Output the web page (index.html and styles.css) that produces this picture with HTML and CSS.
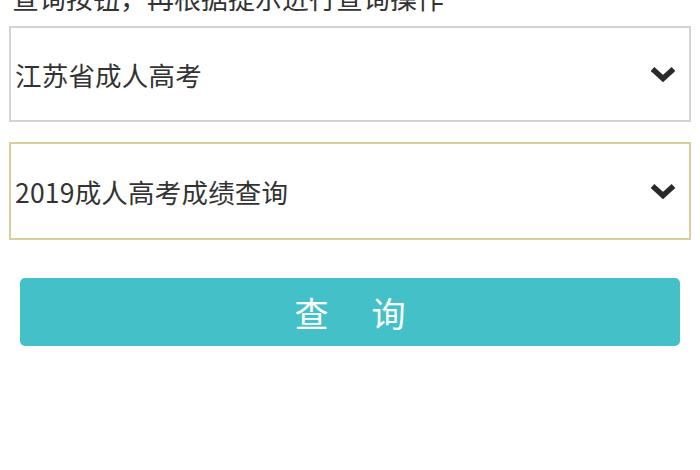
FILE: index.html
```html
<!DOCTYPE html>
<html lang="zh-CN">
<head>
<meta charset="utf-8">
<title>查询</title>
<link rel="stylesheet" href="styles.css">
</head>
<body>
<div class="page">
  <p class="hint">查询按钮，再根据提示进行查询操作</p>
  <div class="select select-gray">
    <span class="select-text">江苏省成人高考</span>
    <svg class="chev" width="28" height="18" viewBox="0 0 28 18"><path d="M3.5 4 L14 13.5 L24.5 4" fill="none" stroke="#2a2a2a" stroke-width="5.5" stroke-linejoin="miter" stroke-linecap="butt"/></svg>
  </div>
  <div class="select select-gold">
    <span class="select-text">2019成人高考成绩查询</span>
    <svg class="chev" width="28" height="18" viewBox="0 0 28 18"><path d="M3.5 4 L14 13.5 L24.5 4" fill="none" stroke="#2a2a2a" stroke-width="5.5" stroke-linejoin="miter" stroke-linecap="butt"/></svg>
  </div>
  <div class="btn-wrap">
    <button class="btn"><span>查</span><span>询</span></button>
  </div>
</div>
</body>
</html>
```
FILE: styles.css
```css
html, body {
  margin: 0;
  padding: 0;
  background: #ffffff;
}
body {
  font-family: "Noto Sans CJK SC", "Noto Sans", sans-serif;
  color: #2b2b2b;
  overflow: hidden;
}
.page {
  padding: 0 9px;
}
.hint {
  margin: -22px 0 0 3px;
  font-size: 27px;
  line-height: 40px;
  height: 40px;
  color: #333333;
  white-space: nowrap;
}
.select {
  box-sizing: border-box;
  display: flex;
  align-items: center;
  justify-content: space-between;
  margin-top: 8px;
  height: 96px;
  padding: 0 12px 0 4px;
  background: #fff;
}
.select-gray {
  border: 2px solid #d3d3d3;
}
.select-gold {
  margin-top: 20px;
  height: 98px;
  border: 2px solid #d9cf9c;
}
.select-text {
  font-size: 26.5px;
  color: #333333;
  letter-spacing: 0.2px;
}
.chev {
  display: block;
}
.btn-wrap {
  padding: 38px 11px 0;
}
.btn {
  display: flex;
  align-items: center;
  justify-content: center;
  gap: 43px;
  width: 100%;
  height: 68px;
  border: none;
  border-radius: 5px;
  background: #44c1c8;
  color: #ffffff;
  font-family: "Noto Sans CJK SC", "Noto Sans", sans-serif;
  font-size: 34px;
  padding: 0;
}
```
